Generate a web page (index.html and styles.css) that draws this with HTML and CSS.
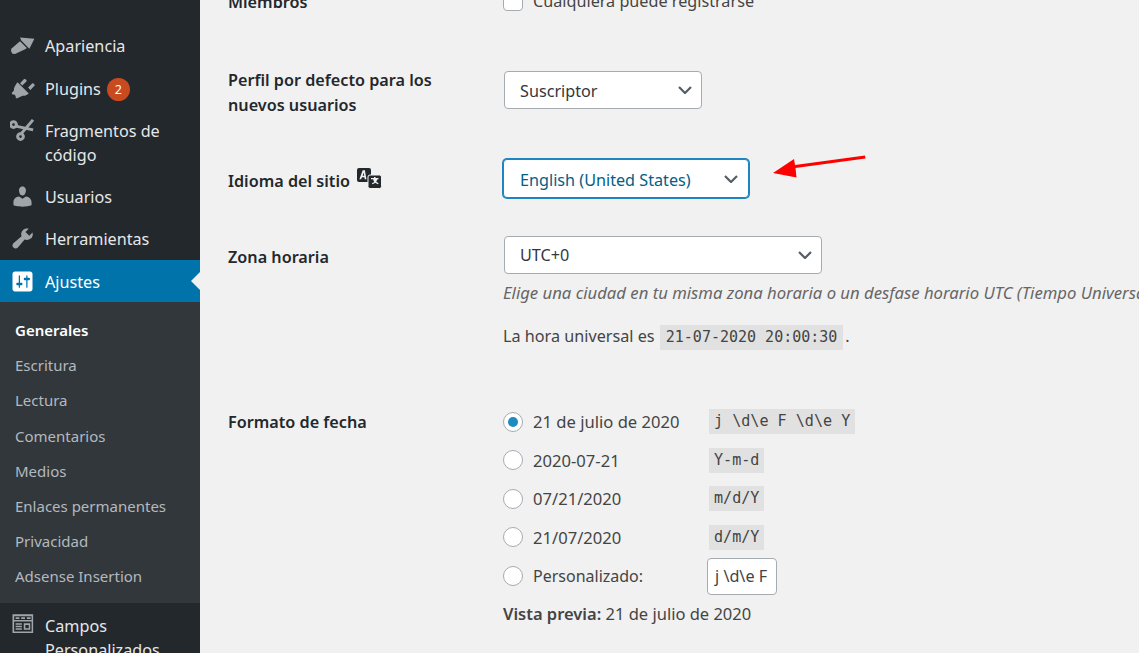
FILE: index.html
```html
<!DOCTYPE html>
<html lang="es">
<head>
<meta charset="utf-8">
<title>Ajustes generales</title>
<link rel="stylesheet" href="styles.css">
</head>
<body>
<div class="app">
  <nav class="side">
    <ul class="menu">
      <li class="item"><svg class="ic" viewBox="0 0 20 20"><path d="M8 3.500L19.500 4.500 15.500 12.500 9 6zM8 6.500L13.500 12 12.500 12.700 4 16.700 2 16.500.8 14.500 1 12.500z"/></svg><span class="label">Apariencia</span></li>
      <li class="item"><svg class="ic" viewBox="0 0 20 20"><path d="M13.110 4.360L9.870 7.600 8 5.730l3.240-3.240c.35-.34 1.050-.2 1.560.32.52.51.66 1.210.31 1.550zm-8 1.770l.91-1.120 9.010 9.010-1.190.84c-.71.71-2.630 1.160-3.820 1L6.200 17.640c-.35.35-.98.3-1.410-.12-.42-.43-.47-1.060-.12-1.410l-1.440-1.440c-.35.35-.98.3-1.410-.12-.42-.43-.47-1.060-.12-1.410l1.450-1.450c-.16-1.190.29-3.110 1-3.820zm9.360 3.130l3.240-3.240c.34-.35 1.040-.21 1.550.31.52.51.66 1.210.31 1.550l-3.240 3.250z"/></svg><span class="label">Plugins</span><b class="badge">2</b></li>
      <li class="item tall"><svg class="ic" viewBox="0 0 20 20"><g class="scissors"><circle cx="2.800" cy="5.200" r="2.300"/><circle cx="8.400" cy="14.800" r="2.300"/><path d="M4.500 6.500l14 3M9 12.500L18.400 1.500"/></g></svg><span class="label">Fragmentos de código</span></li>
      <li class="item"><svg class="ic" viewBox="0 0 20 20"><path d="M10 9.250c-2.270 0-2.730-3.440-2.730-3.440C7 4.020 7.820 2 9.970 2c2.160 0 2.980 2.020 2.710 3.810 0 0-.41 3.440-2.680 3.440zm0 2.570L12.720 10c2.390 0 4.520 2.330 4.520 4.530v2.490s-3.650 1.130-7.240 1.130c-3.650 0-7.240-1.130-7.240-1.130v-2.490c0-2.250 1.940-4.480 4.470-4.480z"/></svg><span class="label">Usuarios</span></li>
      <li class="item"><svg class="ic" viewBox="0 0 20 20"><path d="M16.680 9.770c-1.340 1.340-3.300 1.670-4.950.99l-5.410 6.520c-.99.99-2.590.99-3.580 0s-.99-2.590 0-3.570l6.520-5.420c-.68-1.650-.35-3.610.99-4.950 1.280-1.280 3.120-1.640 4.730-1.070l-2.600 2.600 3.010 3.010 2.600-2.600c.57 1.610.21 3.450-1.070 4.730z"/></svg><span class="label">Herramientas</span></li>
      <li class="item current"><svg class="ic" viewBox="0 0 20 20"><path class="white" d="M18 16V4c0-1.100-.9-2-2-2H4c-1.100 0-2 .9-2 2v12c0 1.100.9 2 2 2h12c1.100 0 2-.9 2-2zM8 11h1c.55 0 1 .45 1 1s-.45 1-1 1H8v1.500c0 .28-.22.5-.5.5s-.5-.22-.5-.5V13H6c-.55 0-1-.45-1-1s.45-1 1-1h1V5.500c0-.28.22-.5.5-.5s.5.22.5.5V11zm5-2h-1c-.55 0-1-.45-1-1s.45-1 1-1h1V5.500c0-.28.22-.5.5-.5s.5.22.5.5V7h1c.55 0 1 .45 1 1s-.45 1-1 1h-1v5.500c0 .28-.22.5-.5.5s-.5-.22-.5-.5V9z"/></svg><span class="label">Ajustes</span></li>
    </ul>
    <ul class="sub">
      <li class="sub-item sub-on">Generales</li>
      <li class="sub-item">Escritura</li>
      <li class="sub-item">Lectura</li>
      <li class="sub-item">Comentarios</li>
      <li class="sub-item">Medios</li>
      <li class="sub-item">Enlaces permanentes</li>
      <li class="sub-item">Privacidad</li>
      <li class="sub-item">Adsense Insertion</li>
    </ul>
    <ul class="menu menu-last">
      <li class="item tall"><svg class="ic" viewBox="0 0 20 20"><path fill-rule="evenodd" d="M2 1h16.500v15H2zM3.300 2.500v3h14v-3zM4.500 3.300h3v1.400h-3zM9 3.300h3v1.400H9zM13.500 3.300h3v1.400h-3zM3.300 6.800v8h14v-8zM4.500 8.200h5v1.200h-5zM4.500 10.200h5v1.200h-5zM4.500 12.200h5v1.200h-5zM11 8.200h5.200v5.200H11zM12.300 9.500v2.700h2.700V9.500z"/></svg><span class="label">Campos Personalizados</span></li>
    </ul>
  </nav>
  <main class="main">
    <div class="row row-members">
      <div class="th">Miembros</div>
      <div class="td"><label class="check"><i class="box"></i>Cualquiera puede registrarse</label></div>
    </div>
    <div class="row row-role">
      <div class="th th-two">Perfil por defecto para los nuevos usuarios</div>
      <div class="td"><div class="select sel-role"><span class="sel-text">Suscriptor</span><svg class="chev" viewBox="0 0 14 8"><path d="M1 1l6 6 6-6"/></svg></div></div>
    </div>
    <div class="row row-lang">
      <div class="th th-lang">Idioma del sitio <svg class="tr" viewBox="0 0 26 21"><rect class="tr-dark" x="1" y="0" width="14" height="14" rx="2"/><path class="tr-light" d="M6.700 2.200h2.200l1.500 9H8.700l-.3-2H6l-.9 2H3.400zM6.600 7.800h1.600l-.4-3.200z"/><rect class="tr-dark tr-front" x="12" y="7" width="13.500" height="13.500" rx="2"/><path class="tr-light" d="M15 10h3v-1h1.500v1h3v1.300h-1.100c-.3 1-.7 1.800-1.200 2.500.6.500 1.400.9 2.400 1.200l-.6 1.200c-1.100-.3-2-.8-2.700-1.400-.7.6-1.600 1.100-2.800 1.500l-.6-1.200c1-.3 1.800-.7 2.400-1.200-.5-.7-.9-1.500-1.100-2.600H15z"/></svg></div>
      <div class="td"><div class="select sel-lang"><span class="sel-text">English (United States)</span><svg class="chev" viewBox="0 0 14 8"><path d="M1 1l6 6 6-6"/></svg></div></div>
    </div>
    <div class="row row-zone">
      <div class="th">Zona horaria</div>
      <div class="td">
        <div class="select sel-zone"><span>UTC+0</span><svg class="chev" viewBox="0 0 14 8"><path d="M1 1l6 6 6-6"/></svg></div>
        <p class="desc">Elige una ciudad en tu misma zona horaria o un desfase horario UTC (Tiempo Universal Coordinado)</p>
        <p class="utc">La hora universal es <code class="code code-utc">21-07-2020 20:00:30</code>.</p>
      </div>
    </div>
    <div class="row row-date">
      <div class="th th-date">Formato de fecha</div>
      <div class="td">
        <div class="opt"><i class="radio on"></i><span class="opt-label">21 de julio de 2020</span><code class="code">j \d\e F \d\e Y</code></div>
        <div class="opt"><i class="radio"></i><span class="opt-label">2020-07-21</span><code class="code">Y-m-d</code></div>
        <div class="opt"><i class="radio"></i><span class="opt-label">07/21/2020</span><code class="code">m/d/Y</code></div>
        <div class="opt"><i class="radio"></i><span class="opt-label">21/07/2020</span><code class="code">d/m/Y</code></div>
        <div class="opt"><i class="radio"></i><span class="opt-label opt-custom">Personalizado:</span><span class="custom">j \d\e F</span></div>
        <p class="preview"><strong>Vista previa:</strong> 21 de julio de 2020</p>
      </div>
    </div>
    <svg class="arrow" viewBox="0 0 96 24" preserveAspectRatio="none"><path d="M1 18L22 4l1 6 70-9.500.5 3L23.500 13l1 9.500z"/></svg>
  </main>
</div>
</body>
</html>
```
FILE: styles.css
```css
* { box-sizing: border-box; }
html, body { margin: 0; height: 100%; overflow: hidden; }
body { font-family: "Noto Sans", "Open Sans", sans-serif; font-size: 16.2px; color: #444; background: #f1f1f1; }
ul { list-style: none; margin: 0; padding: 0; }
p { margin: 0; }
.app { display: flex; height: 653px; overflow: hidden; }

.side { width: 200px; flex: none; background: #23282d; padding-top: 25px; color: #eee; }
.item { display: flex; align-items: flex-start; height: 42.2px; padding: 9.900px 0 0 10px; line-height: 24px; color: #e6e7e8; position: relative; }
.menu:first-child .item:first-child { padding-top: 9px; }
.item.tall { height: 66px; }
.menu-last .item { padding-top: 9.600px; }
.label { max-width: 125px; margin-left: 10px; }
.ic { width: 25px; height: 25px; flex: none; fill: #a0a5aa; margin-top: -1px; }
.scissors { fill: none; stroke: #a0a5aa; stroke-width: 2.400; }
.item.current { background: #0073aa; color: #fff; height: 42px; }
.white { fill: #fff; }
.item.current::after { content: ""; position: absolute; right: 0; top: 12px; border: 9px solid transparent; border-right-color: #f1f1f1; border-left-width: 0; }
.badge { width: 23px; height: 23px; margin: 1px 0 0 6px; border-radius: 50%; background: #ca4a1f; color: #fff; font-size: 12.500px; font-weight: 400; line-height: 23px; text-align: center; }
.sub { background: #32373c; padding: 11.400px 0 9px; height: 301px; }
.sub-item { height: 35.150px; line-height: 35px; padding-left: 15px; font-size: 15px; color: #b4b9be; }
.sub-on { color: #fff; font-weight: 600; }
.menu-last { padding-top: 2px; }

.main { flex: 1; min-width: 0; padding: 0 0 0 28px; position: relative; overflow: hidden; }
.row { display: flex; }
.th { width: 275px; flex: none; font-weight: 600; color: #23282d; line-height: 25px; }
.th-two { width: 230px; margin-right: 45px; margin-top: -3px; }
.td { flex: 1; min-width: 0; }
.row-members { height: 80px; margin-top: -10px; }
.check { display: flex; align-items: center; line-height: 22px; color: #444; }
.box { width: 20px; height: 20px; margin-right: 10px; background: #fff; border: 1px solid #a6abb0; border-radius: 4px; }
.row-role { height: 89px; padding-top: 1px; }
.row-lang { height: 77px; }
.th-lang { display: flex; align-items: flex-start; gap: 6px; padding-top: 10px; }
.tr { width: 26px; height: 21px; flex: none; margin-top: -1px; }
.tr-dark { fill: #23282d; }
.tr-front { stroke: #f1f1f1; stroke-width: 1; }
.tr-light { fill: #f1f1f1; }
.row-zone { height: 173px; }
.row-zone .th { padding-top: 9px; }

.select { display: flex; align-items: center; justify-content: space-between; height: 38px; padding: 0 9px 0 15px; margin-left: 1px; background: #fff; border: 1px solid #a6abb0; border-radius: 4px; line-height: 24px; color: #32373c; }
.sel-text { padding-top: 2px; }
.sel-role { width: 198px; }
.sel-lang { width: 246px; height: 39px; margin-left: 0; padding-left: 16px; padding-right: 10px; border-color: #1d85c0; box-shadow: 0 0 0 1px #1d85c0; color: #016087; }
.sel-zone { width: 318px; }
.chev { width: 14px; height: 8px; fill: none; stroke: #555d66; stroke-width: 2.200; }
.desc { margin-top: 7px; font-size: 16.700px; font-style: italic; color: #666; white-space: nowrap; line-height: 24px; }
.utc { margin-top: 19px; line-height: 24px; }
.code { display: inline-block; height: 25px; line-height: 25px; font-family: "DejaVu Sans Mono", "Liberation Mono", monospace; font-size: 15.100px; color: #444; background: #e1e1e1; padding: 0 5px; }
.code-utc { padding: 0 6px; margin: 0 2px 0 1px; font-size: 15px; vertical-align: middle; }

.th-date { padding-top: 1px; }
.opt { display: flex; align-items: center; height: 38.600px; }
.opt:first-child { margin-top: -6.600px; }
.radio { width: 20px; height: 20px; margin-right: 10px; flex: none; border-radius: 50%; background: #fff; border: 1px solid #a6abb0; display: flex; align-items: center; justify-content: center; }
.radio.on::before { content: ""; width: 10px; height: 10px; border-radius: 50%; background: #1e8cbe; }
.opt-label { width: 176px; flex: none; font-size: 16.600px; white-space: nowrap; }
.opt-custom { font-size: 16px; }
.custom { margin-left: -2px; width: 70px; height: 37px; padding: 0 7px; background: #fff; border: 1px solid #a6abb0; border-radius: 4px; line-height: 35px; overflow: hidden; white-space: nowrap; }
.preview { margin-top: 7px; font-size: 16.500px; line-height: 24px; }
.preview strong { font-weight: 600; }

.arrow { position: absolute; left: 572px; top: 155px; width: 96px; height: 24px; fill: #f00; }
```
